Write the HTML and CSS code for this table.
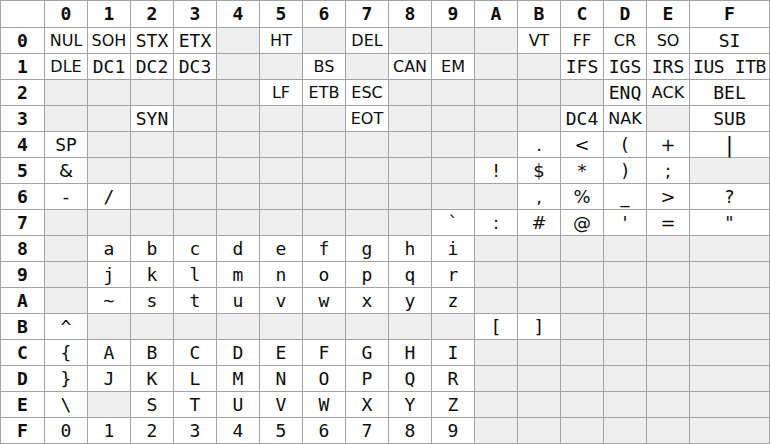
FILE: index.html
```html
<!DOCTYPE html>
<html>
<head>
<meta charset="utf-8">
<link rel="stylesheet" href="styles.css">
</head>
<body>
<div class="table">
<div class="h"></div><div class="h">0</div><div class="h">1</div><div class="h">2</div><div class="h">3</div><div class="h">4</div><div class="h">5</div><div class="h">6</div><div class="h">7</div><div class="h">8</div><div class="h">9</div><div class="h">A</div><div class="h">B</div><div class="h">C</div><div class="h">D</div><div class="h">E</div><div class="h">F</div>

<div class="h">0</div><div class="c s">NUL</div><div class="c s">SOH</div><div class="c">STX</div><div class="c">ETX</div><div class="e"></div><div class="c s">HT</div><div class="e"></div><div class="c s">DEL</div><div class="e"></div><div class="e"></div><div class="e"></div><div class="c s">VT</div><div class="c s">FF</div><div class="c s">CR</div><div class="c s">SO</div><div class="c">SI</div>

<div class="h">1</div><div class="c s">DLE</div><div class="c">DC1</div><div class="c">DC2</div><div class="c">DC3</div><div class="e"></div><div class="e"></div><div class="c s">BS</div><div class="e"></div><div class="c s">CAN</div><div class="c s">EM</div><div class="e"></div><div class="e"></div><div class="c">IFS</div><div class="c">IGS</div><div class="c">IRS</div><div class="c wide">IUS ITB</div>

<div class="h">2</div><div class="e"></div><div class="e"></div><div class="e"></div><div class="e"></div><div class="e"></div><div class="c s">LF</div><div class="c s">ETB</div><div class="c s">ESC</div><div class="e"></div><div class="e"></div><div class="e"></div><div class="e"></div><div class="e"></div><div class="c">ENQ</div><div class="c s">ACK</div><div class="c">BEL</div>

<div class="h">3</div><div class="e"></div><div class="e"></div><div class="c">SYN</div><div class="e"></div><div class="e"></div><div class="e"></div><div class="e"></div><div class="c s">EOT</div><div class="e"></div><div class="e"></div><div class="e"></div><div class="e"></div><div class="c">DC4</div><div class="c s">NAK</div><div class="e"></div><div class="c">SUB</div>

<div class="h">4</div><div class="c">SP</div><div class="e"></div><div class="e"></div><div class="e"></div><div class="e"></div><div class="e"></div><div class="e"></div><div class="e"></div><div class="e"></div><div class="e"></div><div class="e"></div><div class="c p">.</div><div class="c p">&lt;</div><div class="c p">(</div><div class="c p">+</div><div class="c p bar">|</div>

<div class="h">5</div><div class="c p">&amp;</div><div class="e"></div><div class="e"></div><div class="e"></div><div class="e"></div><div class="e"></div><div class="e"></div><div class="e"></div><div class="e"></div><div class="e"></div><div class="c p">!</div><div class="c p">$</div><div class="c p">*</div><div class="c p">)</div><div class="c p">;</div><div class="e"></div>

<div class="h">6</div><div class="c">-</div><div class="c">/</div><div class="e"></div><div class="e"></div><div class="e"></div><div class="e"></div><div class="e"></div><div class="e"></div><div class="e"></div><div class="e"></div><div class="e"></div><div class="c p">,</div><div class="c p">%</div><div class="c p">_</div><div class="c p">&gt;</div><div class="c p">?</div>

<div class="h">7</div><div class="e"></div><div class="e"></div><div class="e"></div><div class="e"></div><div class="e"></div><div class="e"></div><div class="e"></div><div class="e"></div><div class="e"></div><div class="c p">`</div><div class="c p">:</div><div class="c p">#</div><div class="c p">@</div><div class="c p">'</div><div class="c p">=</div><div class="c p">"</div>

<div class="h">8</div><div class="e"></div><div class="c">a</div><div class="c">b</div><div class="c">c</div><div class="c">d</div><div class="c">e</div><div class="c">f</div><div class="c">g</div><div class="c">h</div><div class="c">i</div><div class="e"></div><div class="e"></div><div class="e"></div><div class="e"></div><div class="e"></div><div class="e"></div>

<div class="h">9</div><div class="e"></div><div class="c">j</div><div class="c">k</div><div class="c">l</div><div class="c">m</div><div class="c">n</div><div class="c">o</div><div class="c">p</div><div class="c">q</div><div class="c">r</div><div class="e"></div><div class="e"></div><div class="e"></div><div class="e"></div><div class="e"></div><div class="e"></div>

<div class="h">A</div><div class="e"></div><div class="c">~</div><div class="c">s</div><div class="c">t</div><div class="c">u</div><div class="c">v</div><div class="c">w</div><div class="c">x</div><div class="c">y</div><div class="c">z</div><div class="e"></div><div class="e"></div><div class="e"></div><div class="e"></div><div class="e"></div><div class="e"></div>

<div class="h">B</div><div class="c">^</div><div class="e"></div><div class="e"></div><div class="e"></div><div class="e"></div><div class="e"></div><div class="e"></div><div class="e"></div><div class="e"></div><div class="e"></div><div class="c">[</div><div class="c">]</div><div class="e"></div><div class="e"></div><div class="e"></div><div class="e"></div>

<div class="h">C</div><div class="c">{</div><div class="c">A</div><div class="c">B</div><div class="c">C</div><div class="c">D</div><div class="c">E</div><div class="c">F</div><div class="c">G</div><div class="c">H</div><div class="c">I</div><div class="e"></div><div class="e"></div><div class="e"></div><div class="e"></div><div class="e"></div><div class="e"></div>

<div class="h">D</div><div class="c">}</div><div class="c">J</div><div class="c">K</div><div class="c">L</div><div class="c">M</div><div class="c">N</div><div class="c">O</div><div class="c">P</div><div class="c">Q</div><div class="c">R</div><div class="e"></div><div class="e"></div><div class="e"></div><div class="e"></div><div class="e"></div><div class="e"></div>

<div class="h">E</div><div class="c">\</div><div class="e"></div><div class="c">S</div><div class="c">T</div><div class="c">U</div><div class="c">V</div><div class="c">W</div><div class="c">X</div><div class="c">Y</div><div class="c">Z</div><div class="e"></div><div class="e"></div><div class="e"></div><div class="e"></div><div class="e"></div><div class="e"></div>

<div class="h">F</div><div class="c">0</div><div class="c">1</div><div class="c">2</div><div class="c">3</div><div class="c">4</div><div class="c">5</div><div class="c">6</div><div class="c">7</div><div class="c">8</div><div class="c">9</div><div class="e"></div><div class="e"></div><div class="e"></div><div class="e"></div><div class="e"></div><div class="e"></div>
</div>
</body>
</html>
```
FILE: styles.css
```css
html, body {
  margin: 0;
  padding: 0;
  background: #ffffff;
}
body {
  width: 770px;
  height: 444px;
  overflow: hidden;
}
.table {
  display: grid;
  grid-template-columns: 43px repeat(15, 42px) 79px;
  grid-template-rows: 26px repeat(16, 25px);
  gap: 1px;
  padding: 1px;
  background: #a3a3a3;
  width: 770px;
  height: 444px;
  box-sizing: border-box;
  font-family: "DejaVu Sans Mono", "Liberation Mono", monospace;
  font-size: 18px;
  color: #0d0d0d;
}
.table > div {
  display: flex;
  align-items: center;
  justify-content: center;
  white-space: nowrap;
  overflow: visible;
  line-height: 1;
}
.h {
  background: #ffffff;
  font-weight: bold;
}
.c {
  background: #ffffff;
}
.e {
  background: #efefef;
}
.s {
  font-family: "DejaVu Sans", "Liberation Sans", sans-serif;
  font-size: 16px;
}
.p {
  font-family: "DejaVu Sans", "Liberation Sans", sans-serif;
  font-size: 18px;
}
.bar {
  font-size: 22px;
}
.wide {
  letter-spacing: -0.4px;
}
```
